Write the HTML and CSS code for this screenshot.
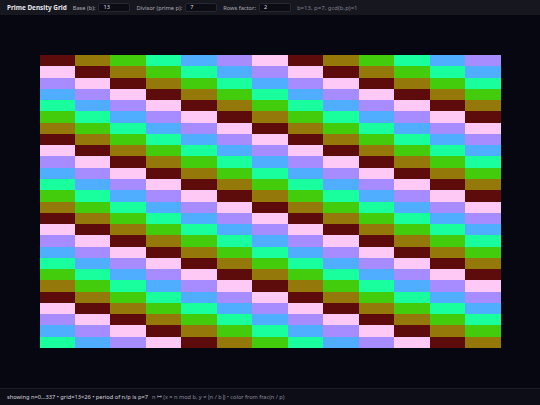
FILE: index.html
```html
<!DOCTYPE html>
<html>
<head>
<meta charset="utf-8">
<link rel="stylesheet" href="styles.css">
</head>
<body>
<div class="app">
  <header class="bar">
    <span class="title">Prime Density Grid</span>
    <label class="field">Base (b): <span class="input">13</span></label>
    <label class="field">Divisor (prime p): <span class="input">7</span></label>
    <label class="field">Rows factor: <span class="input">2</span></label>
    <span class="info">b=13, p=7, gcd(b,p)=1</span>
  </header>
  <main class="stage">
    <div class="grid">
      <i class="k0"></i><i class="k1"></i><i class="k2"></i><i class="k3"></i><i class="k4"></i><i class="k5"></i><i class="k6"></i><i class="k0"></i><i class="k1"></i><i class="k2"></i><i class="k3"></i><i class="k4"></i><i class="k5"></i>
      <i class="k6"></i><i class="k0"></i><i class="k1"></i><i class="k2"></i><i class="k3"></i><i class="k4"></i><i class="k5"></i><i class="k6"></i><i class="k0"></i><i class="k1"></i><i class="k2"></i><i class="k3"></i><i class="k4"></i>
      <i class="k5"></i><i class="k6"></i><i class="k0"></i><i class="k1"></i><i class="k2"></i><i class="k3"></i><i class="k4"></i><i class="k5"></i><i class="k6"></i><i class="k0"></i><i class="k1"></i><i class="k2"></i><i class="k3"></i>
      <i class="k4"></i><i class="k5"></i><i class="k6"></i><i class="k0"></i><i class="k1"></i><i class="k2"></i><i class="k3"></i><i class="k4"></i><i class="k5"></i><i class="k6"></i><i class="k0"></i><i class="k1"></i><i class="k2"></i>
      <i class="k3"></i><i class="k4"></i><i class="k5"></i><i class="k6"></i><i class="k0"></i><i class="k1"></i><i class="k2"></i><i class="k3"></i><i class="k4"></i><i class="k5"></i><i class="k6"></i><i class="k0"></i><i class="k1"></i>
      <i class="k2"></i><i class="k3"></i><i class="k4"></i><i class="k5"></i><i class="k6"></i><i class="k0"></i><i class="k1"></i><i class="k2"></i><i class="k3"></i><i class="k4"></i><i class="k5"></i><i class="k6"></i><i class="k0"></i>
      <i class="k1"></i><i class="k2"></i><i class="k3"></i><i class="k4"></i><i class="k5"></i><i class="k6"></i><i class="k0"></i><i class="k1"></i><i class="k2"></i><i class="k3"></i><i class="k4"></i><i class="k5"></i><i class="k6"></i>
      <i class="k0"></i><i class="k1"></i><i class="k2"></i><i class="k3"></i><i class="k4"></i><i class="k5"></i><i class="k6"></i><i class="k0"></i><i class="k1"></i><i class="k2"></i><i class="k3"></i><i class="k4"></i><i class="k5"></i>
      <i class="k6"></i><i class="k0"></i><i class="k1"></i><i class="k2"></i><i class="k3"></i><i class="k4"></i><i class="k5"></i><i class="k6"></i><i class="k0"></i><i class="k1"></i><i class="k2"></i><i class="k3"></i><i class="k4"></i>
      <i class="k5"></i><i class="k6"></i><i class="k0"></i><i class="k1"></i><i class="k2"></i><i class="k3"></i><i class="k4"></i><i class="k5"></i><i class="k6"></i><i class="k0"></i><i class="k1"></i><i class="k2"></i><i class="k3"></i>
      <i class="k4"></i><i class="k5"></i><i class="k6"></i><i class="k0"></i><i class="k1"></i><i class="k2"></i><i class="k3"></i><i class="k4"></i><i class="k5"></i><i class="k6"></i><i class="k0"></i><i class="k1"></i><i class="k2"></i>
      <i class="k3"></i><i class="k4"></i><i class="k5"></i><i class="k6"></i><i class="k0"></i><i class="k1"></i><i class="k2"></i><i class="k3"></i><i class="k4"></i><i class="k5"></i><i class="k6"></i><i class="k0"></i><i class="k1"></i>
      <i class="k2"></i><i class="k3"></i><i class="k4"></i><i class="k5"></i><i class="k6"></i><i class="k0"></i><i class="k1"></i><i class="k2"></i><i class="k3"></i><i class="k4"></i><i class="k5"></i><i class="k6"></i><i class="k0"></i>
      <i class="k1"></i><i class="k2"></i><i class="k3"></i><i class="k4"></i><i class="k5"></i><i class="k6"></i><i class="k0"></i><i class="k1"></i><i class="k2"></i><i class="k3"></i><i class="k4"></i><i class="k5"></i><i class="k6"></i>
      <i class="k0"></i><i class="k1"></i><i class="k2"></i><i class="k3"></i><i class="k4"></i><i class="k5"></i><i class="k6"></i><i class="k0"></i><i class="k1"></i><i class="k2"></i><i class="k3"></i><i class="k4"></i><i class="k5"></i>
      <i class="k6"></i><i class="k0"></i><i class="k1"></i><i class="k2"></i><i class="k3"></i><i class="k4"></i><i class="k5"></i><i class="k6"></i><i class="k0"></i><i class="k1"></i><i class="k2"></i><i class="k3"></i><i class="k4"></i>
      <i class="k5"></i><i class="k6"></i><i class="k0"></i><i class="k1"></i><i class="k2"></i><i class="k3"></i><i class="k4"></i><i class="k5"></i><i class="k6"></i><i class="k0"></i><i class="k1"></i><i class="k2"></i><i class="k3"></i>
      <i class="k4"></i><i class="k5"></i><i class="k6"></i><i class="k0"></i><i class="k1"></i><i class="k2"></i><i class="k3"></i><i class="k4"></i><i class="k5"></i><i class="k6"></i><i class="k0"></i><i class="k1"></i><i class="k2"></i>
      <i class="k3"></i><i class="k4"></i><i class="k5"></i><i class="k6"></i><i class="k0"></i><i class="k1"></i><i class="k2"></i><i class="k3"></i><i class="k4"></i><i class="k5"></i><i class="k6"></i><i class="k0"></i><i class="k1"></i>
      <i class="k2"></i><i class="k3"></i><i class="k4"></i><i class="k5"></i><i class="k6"></i><i class="k0"></i><i class="k1"></i><i class="k2"></i><i class="k3"></i><i class="k4"></i><i class="k5"></i><i class="k6"></i><i class="k0"></i>
      <i class="k1"></i><i class="k2"></i><i class="k3"></i><i class="k4"></i><i class="k5"></i><i class="k6"></i><i class="k0"></i><i class="k1"></i><i class="k2"></i><i class="k3"></i><i class="k4"></i><i class="k5"></i><i class="k6"></i>
      <i class="k0"></i><i class="k1"></i><i class="k2"></i><i class="k3"></i><i class="k4"></i><i class="k5"></i><i class="k6"></i><i class="k0"></i><i class="k1"></i><i class="k2"></i><i class="k3"></i><i class="k4"></i><i class="k5"></i>
      <i class="k6"></i><i class="k0"></i><i class="k1"></i><i class="k2"></i><i class="k3"></i><i class="k4"></i><i class="k5"></i><i class="k6"></i><i class="k0"></i><i class="k1"></i><i class="k2"></i><i class="k3"></i><i class="k4"></i>
      <i class="k5"></i><i class="k6"></i><i class="k0"></i><i class="k1"></i><i class="k2"></i><i class="k3"></i><i class="k4"></i><i class="k5"></i><i class="k6"></i><i class="k0"></i><i class="k1"></i><i class="k2"></i><i class="k3"></i>
      <i class="k4"></i><i class="k5"></i><i class="k6"></i><i class="k0"></i><i class="k1"></i><i class="k2"></i><i class="k3"></i><i class="k4"></i><i class="k5"></i><i class="k6"></i><i class="k0"></i><i class="k1"></i><i class="k2"></i>
      <i class="k3"></i><i class="k4"></i><i class="k5"></i><i class="k6"></i><i class="k0"></i><i class="k1"></i><i class="k2"></i><i class="k3"></i><i class="k4"></i><i class="k5"></i><i class="k6"></i><i class="k0"></i><i class="k1"></i>
    </div>
  </main>
  <footer class="foot">
    <span class="stat">showing n=0…337 • grid=13×26 • period of n/p is p=7</span>
    <span class="formula">n ↦ (x = n mod b, y = ⌊n / b⌋) • color from frac(n / p)</span>
  </footer>
</div>
</body>
</html>
```
FILE: styles.css
```css
* { box-sizing: border-box; }
html, body { margin: 0; padding: 0; }
body {
  width: 540px;
  height: 405px;
  background: #070711;
  font-family: "Noto Sans", "Open Sans", sans-serif;
  overflow: hidden;
}
.app {
  display: flex;
  flex-direction: column;
  height: 405px;
}
.bar {
  height: 15px;
  flex: none;
  background: #17171f;
  display: flex;
  align-items: center;
  padding-left: 7px;
  gap: 6px;
  font-size: 5.7px;
  color: #a9a9b8;
}
.title {
  font-weight: 700;
  font-size: 6.4px;
  color: #e6e6ee;
}
.field {
  display: flex;
  align-items: center;
  gap: 1.5px;
  white-space: pre;
}
.input {
  display: block;
  width: 32px;
  height: 9px;
  line-height: 7px;
  padding-left: 4px;
  background: #0c0c15;
  border: 1px solid #272733;
  border-radius: 2px;
  color: #d6d6e0;
  font-size: 5.6px;
}
.info {
  font-size: 6px;
  color: #7f7f90;
}
.stage {
  flex: 1;
  display: flex;
  align-items: center;
  justify-content: center;
  background: #070711;
}
.grid {
  width: 461px;
  height: 293px;
  display: grid;
  grid-template-columns: repeat(13, 1fr);
  grid-template-rows: repeat(26, 1fr);
}
.grid i { display: block; }
.k0 { background: #5e0b0b; }
.k1 { background: #95780a; }
.k2 { background: #42cc0c; }
.k3 { background: #1aff9e; }
.k4 { background: #4faeff; }
.k5 { background: #a68cff; }
.k6 { background: #ffc9f6; }
.foot {
  height: 17px;
  flex: none;
  background: #0d0d17;
  border-top: 1px solid #1c1c28;
  display: flex;
  align-items: center;
  padding-left: 7px;
  gap: 4px;
  font-size: 5.7px;
  color: #d2d2dc;
}
.formula {
  font-size: 5.6px;
  color: #8a8a9a;
}
```
